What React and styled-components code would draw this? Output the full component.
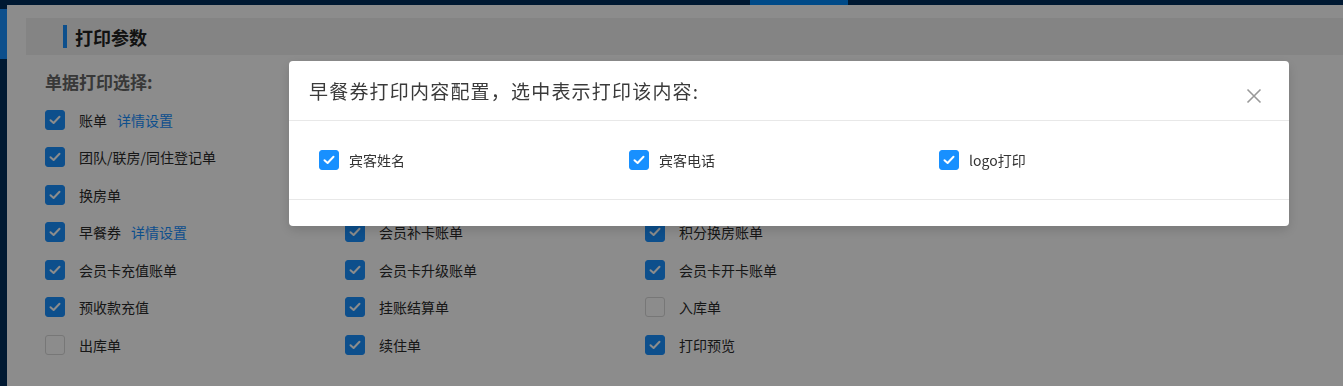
import styled, { createGlobalStyle } from 'styled-components';

const GlobalStyle = createGlobalStyle`
  html, body {
    margin: 0;
    padding: 0;
    background: #ffffff;
    font-family: "Noto Sans CJK SC", "Noto Sans", sans-serif;
  }
  * {
    box-sizing: border-box;
  }
`;

// 앞의 세 줄(2, 3열)은 모달 뒤에 가려져 있어 비워 둠
const columns = [
  [
    { label: '账单', checked: true, link: true },
    { label: '团队/联房/同住登记单', checked: true },
    { label: '换房单', checked: true },
    { label: '早餐券', checked: true, link: true },
    { label: '会员卡充值账单', checked: true },
    { label: '预收款充值', checked: true },
    { label: '出库单', checked: false },
  ],
  [
    null,
    null,
    null,
    { label: '会员补卡账单', checked: true },
    { label: '会员卡升级账单', checked: true },
    { label: '挂账结算单', checked: true },
    { label: '续住单', checked: true },
  ],
  [
    null,
    null,
    null,
    { label: '积分换房账单', checked: true },
    { label: '会员卡开卡账单', checked: true },
    { label: '入库单', checked: false },
    { label: '打印预览', checked: true },
  ],
];

const modalOptions = ['宾客姓名', '宾客电话', 'logo打印'];

const Check = ({ checked }) => (
  <StCheckbox $checked={checked}>
    {checked && (
      <svg width="12" height="10" viewBox="0 0 12 10">
        <path d="M1.5 5.2 L4.6 8 L10.5 1.8" fill="none" stroke="#fff" strokeWidth="2" strokeLinecap="round" strokeLinejoin="round" />
      </svg>
    )}
  </StCheckbox>
);

const App = () => {
  const rows = columns[0].map((_, i) => columns.map((col) => col[i]));

  return (
    <>
      <GlobalStyle />
      <StShell>
        <StTopBar>
          <StTopActive />
        </StTopBar>
        <StBody>
          <StSidebar>
            <StSideActive />
          </StSidebar>
          <StContent>
            <StSectionHeader>
              <StAccent />
              <StSectionTitle>打印参数</StSectionTitle>
            </StSectionHeader>
            <StSubTitle>单据打印选择:</StSubTitle>
            <StGrid>
              {rows.flat().map((item, idx) =>
                item ? (
                  <StItem key={idx}>
                    <Check checked={item.checked} />
                    <StLabel>{item.label}</StLabel>
                    {item.link && <StLink>详情设置</StLink>}
                  </StItem>
                ) : (
                  <StItem key={idx} />
                )
              )}
            </StGrid>
          </StContent>
        </StBody>
      </StShell>

      <StMask>
        <StModal>
          <StModalHeader>
            <StModalTitle>早餐券打印内容配置，选中表示打印该内容:</StModalTitle>
            <StClose type="button" aria-label="close">
              <svg width="16" height="16" viewBox="0 0 16 16">
                <path d="M1.5 1.5 L14.5 14.5 M14.5 1.5 L1.5 14.5" stroke="#999" strokeWidth="1.6" fill="none" />
              </svg>
            </StClose>
          </StModalHeader>
          <StModalBody>
            {modalOptions.map((opt) => (
              <StModalItem key={opt}>
                <Check checked />
                <StModalLabel>{opt}</StModalLabel>
              </StModalItem>
            ))}
          </StModalBody>
          <StModalFooter />
        </StModal>
      </StMask>
    </>
  );
};

export default App;

// ================= styled-components =================

const StShell = styled.div`
  width: 100%;
  height: 386px;
  display: flex;
  flex-direction: column;
  overflow: hidden;
`;

const StTopBar = styled.div`
  height: 5px;
  background: #002e5c;
  padding-left: 750px;
  flex-shrink: 0;
`;

const StTopActive = styled.div`
  width: 98px;
  height: 100%;
  background: #0088f8;
`;

const StBody = styled.div`
  flex: 1;
  display: flex;
`;

const StSidebar = styled.div`
  width: 7px;
  background: #002e5c;
  padding-top: 4px;
`;

const StSideActive = styled.div`
  height: 50px;
  background: #1890ff;
`;

const StContent = styled.div`
  flex: 1;
  padding: 13px 0 0 19px;
  background: #ffffff;
`;

const StSectionHeader = styled.div`
  height: 37px;
  display: flex;
  align-items: center;
  padding-left: 37px;
  background: #f0f0f0;
`;

const StAccent = styled.span`
  width: 4px;
  height: 23px;
  background: #1890ff;
  margin-right: 8px;
`;

const StSectionTitle = styled.h2`
  margin: 0;
  font-size: 18px;
  font-weight: 700;
  color: #222;
`;

const StSubTitle = styled.div`
  margin: 15px 0 0 19px;
  font-size: 17px;
  line-height: 24px;
  font-weight: 700;
  color: #666;
`;

const StGrid = styled.div`
  margin: 7px 0 0 19px;
  display: grid;
  grid-template-columns: repeat(3, 300px);
  grid-auto-rows: 37.5px;
`;

const StItem = styled.div`
  display: flex;
  align-items: center;
`;

const StCheckbox = styled.span`
  width: 20px;
  height: 20px;
  border-radius: 3px;
  flex-shrink: 0;
  display: inline-flex;
  align-items: center;
  justify-content: center;
  background: ${({ $checked }) => ($checked ? '#1890ff' : '#ffffff')};
  border: 1px solid ${({ $checked }) => ($checked ? '#1890ff' : '#d9d9d9')};
`;

const StLabel = styled.span`
  margin-left: 14px;
  font-size: 14px;
  color: #2a2a2a;
`;

const StLink = styled.span`
  margin-left: 10px;
  font-size: 14px;
  color: #1890ff;
`;

const StMask = styled.div`
  position: fixed;
  inset: 0;
  background: rgba(0, 0, 0, 0.45);
  padding: 61px 0 0 289px;
`;

const StModal = styled.div`
  width: 1000px;
  background: #ffffff;
  border-radius: 4px;
  box-shadow: 0 4px 12px rgba(0, 0, 0, 0.15);
`;

const StModalHeader = styled.div`
  height: 60px;
  display: flex;
  align-items: center;
  justify-content: space-between;
  padding: 0 27px 0 20px;
  border-bottom: 1px solid #e8e8e8;
`;

const StModalTitle = styled.div`
  font-size: 19px;
  color: #3a3a3a;
  letter-spacing: 1.2px;
`;

const StClose = styled.button`
  border: none;
  background: transparent;
  padding: 0;
  margin-top: 10px;
  display: flex;
  cursor: pointer;
`;

const StModalBody = styled.div`
  height: 79px;
  display: grid;
  grid-template-columns: repeat(3, 310px);
  align-items: center;
  padding-left: 30px;
  border-bottom: 1px solid #e8e8e8;
`;

const StModalItem = styled.div`
  display: flex;
  align-items: center;
`;

const StModalLabel = styled.span`
  margin-left: 10px;
  font-size: 14px;
  color: #333;
`;

const StModalFooter = styled.div`
  height: 26px;
`;
